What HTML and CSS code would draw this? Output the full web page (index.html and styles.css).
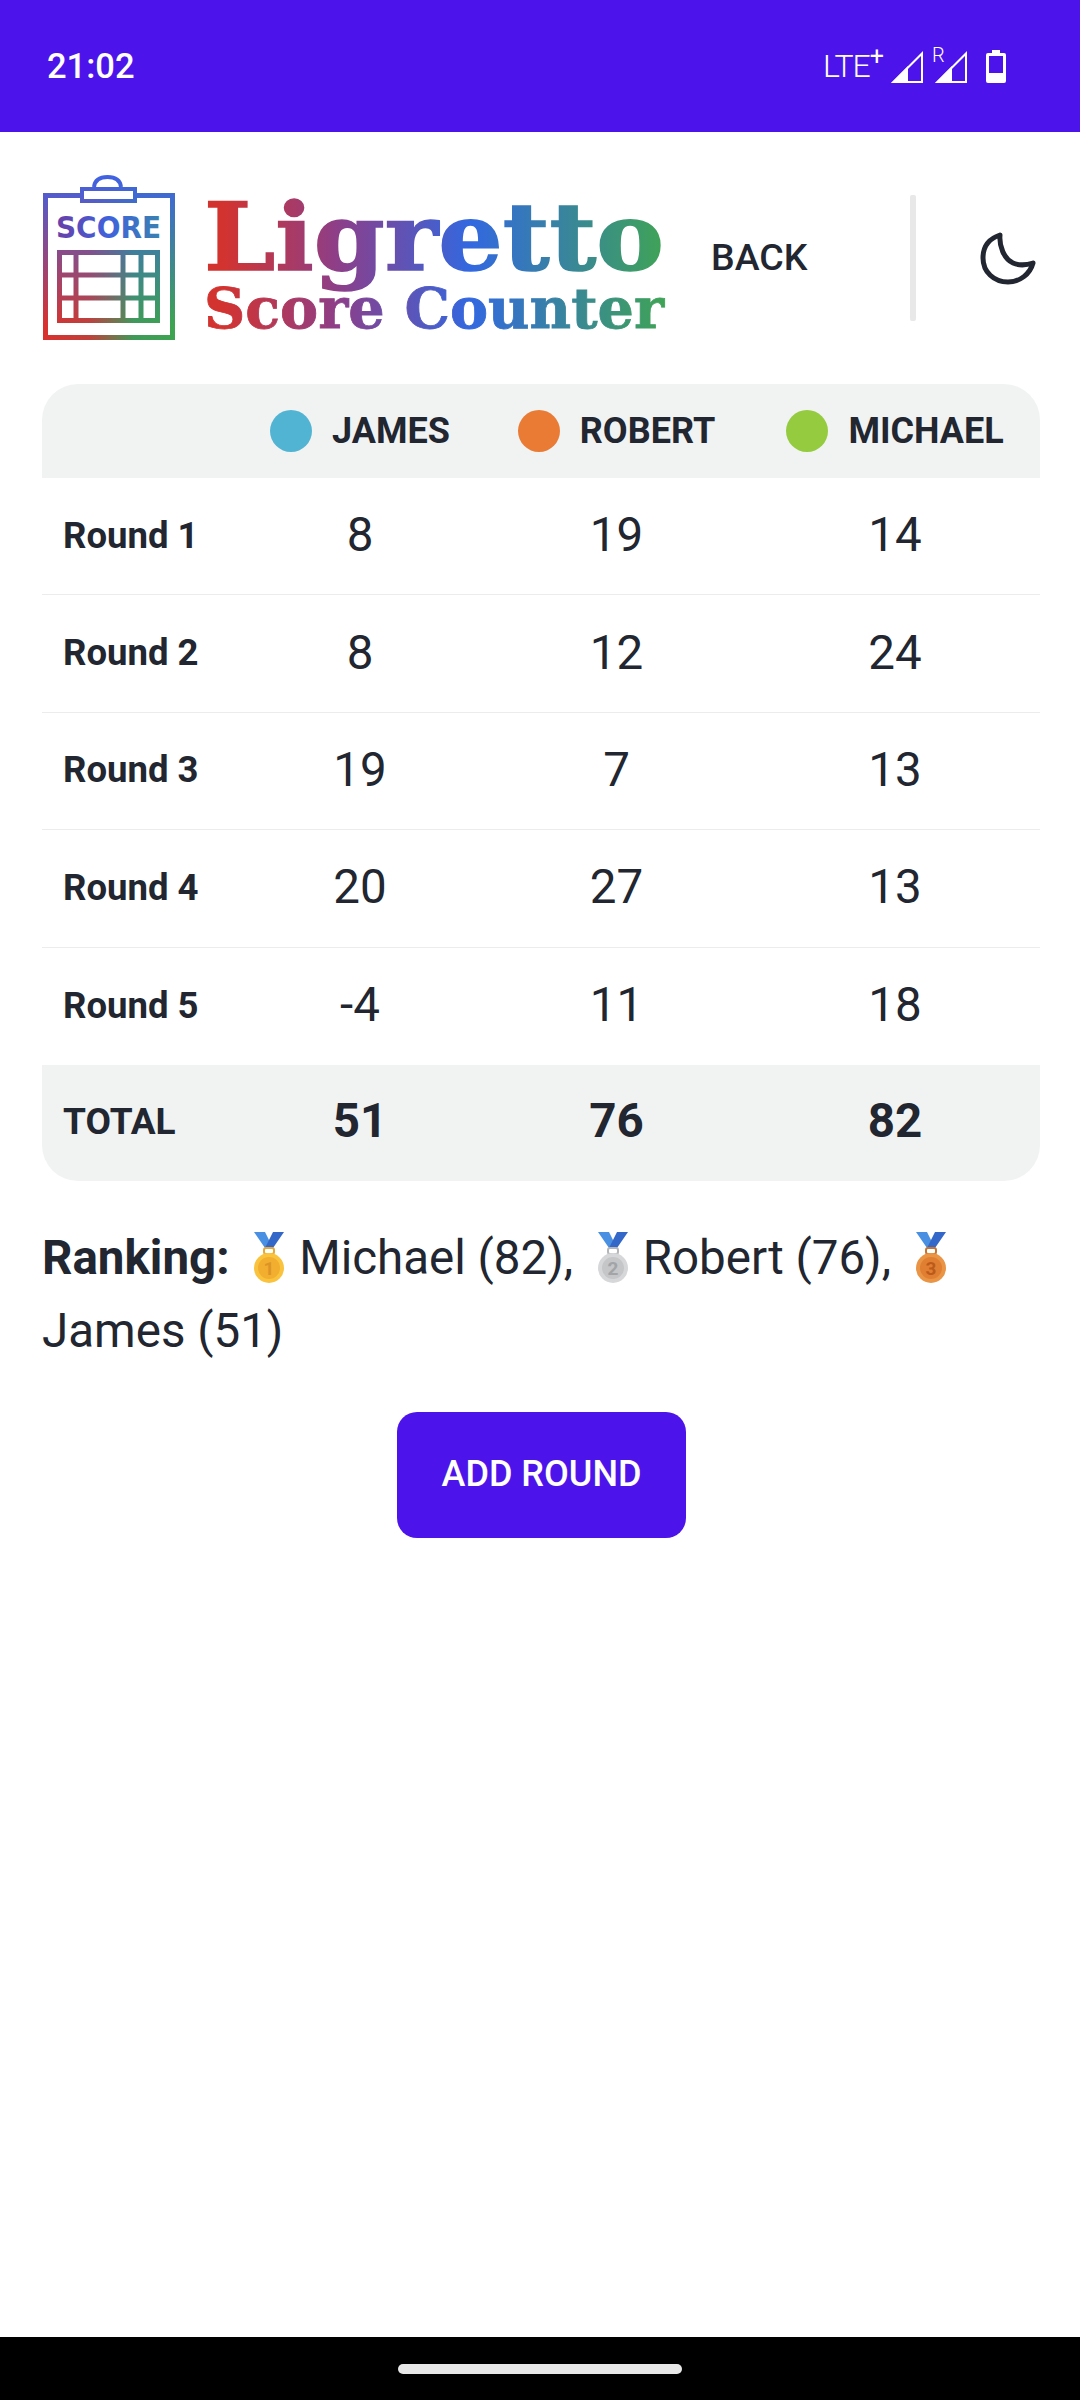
FILE: index.html
```html
<!DOCTYPE html>
<html lang="en">
<head>
  <meta charset="UTF-8" />
  <meta name="viewport" content="width=device-width, initial-scale=1.0"/>
  <title>Ligretto Score Counter</title>
  <link rel="stylesheet" href="styles.css">
</head>
<body>
  <svg class="defs" width="0" height="0">
    <defs>
      <linearGradient id="logoBase" gradientUnits="userSpaceOnUse" x1="0" y1="0" x2="135" y2="0">
        <stop offset="0" stop-color="#da302e"/>
        <stop offset="0.35" stop-color="#c0403a"/>
        <stop offset="0.68" stop-color="#3f9a58"/>
        <stop offset="1" stop-color="#3da550"/>
      </linearGradient>
      <linearGradient id="logoTop" gradientUnits="userSpaceOnUse" x1="0" y1="0" x2="0" y2="150">
        <stop offset="0" stop-color="#3f62e4"/>
        <stop offset="1" stop-color="#3f62e4" stop-opacity="0"/>
      </linearGradient>
      <linearGradient id="scoreGrad" gradientUnits="userSpaceOnUse" x1="14" y1="0" x2="119" y2="0">
        <stop offset="0" stop-color="#6a3fa8"/>
        <stop offset="0.5" stop-color="#3f62dc"/>
        <stop offset="1" stop-color="#3a82b0"/>
      </linearGradient>
      <linearGradient id="textGrad" gradientUnits="userSpaceOnUse" x1="0" y1="0" x2="460" y2="0">
        <stop offset="0.04" stop-color="#d3332f"/>
        <stop offset="0.3" stop-color="#8a3f8c"/>
        <stop offset="0.58" stop-color="#3268e0"/>
        <stop offset="1" stop-color="#3fa356"/>
      </linearGradient>
      <mask id="logoMask" maskUnits="userSpaceOnUse" x="0" y="0" width="135" height="168">
        <g fill="none" stroke="#fff">
          <path d="M38 20.500H3.500V162.500H130.500V20.500H95" stroke-width="5"/>
          <rect x="40" y="14" width="53" height="12" stroke-width="4"/>
          <path d="M52 12C53 4 59 2 65.500 2C72 2 78 4 79 12" stroke-width="4"/>
          <rect x="17.500" y="77.500" width="98" height="68" stroke-width="5"/>
          <path d="M34 77V146M81 77V146M99 77V146M17 100H116M17 123H116" stroke-width="5"/>
        </g>
      </mask>
      <g id="ribbon">
        <path d="M1 0H12L20 16H12Z" fill="#4a90e2"/>
        <path d="M31 0H20L12 16H20Z" fill="#3367c8"/>
      </g>
    </defs>
  </svg>

  <div class="status-bar">
    <span class="clock">21:02</span>
    <div class="status-icons">
      <span class="lte">LTE<sup>+</sup></span>
      <svg class="signal" width="32" height="32" viewBox="0 0 32 32">
        <path d="M31 2.500V31H2.500Z" fill="none" stroke="#fff" stroke-width="2"/>
        <path d="M0 32 17 15V32Z" fill="#fff"/>
      </svg>
      <div class="signal-roaming">
        <span class="roaming">R</span>
        <svg class="signal" width="32" height="32" viewBox="0 0 32 32">
          <path d="M31 2.500V31H2.500Z" fill="none" stroke="#fff" stroke-width="2"/>
          <path d="M0 32 17 15V32Z" fill="#fff"/>
        </svg>
      </div>
      <svg class="battery" width="20" height="33" viewBox="0 0 20 33">
        <path d="M6 0H14V3H18Q20 3 20 5V31Q20 33 18 33H2Q0 33 0 31V5Q0 3 2 3H6Z" fill="#fff"/>
        <rect x="3" y="6" width="14" height="17" fill="#4c14eb"/>
      </svg>
    </div>
  </div>

  <div class="page">
    <header class="top">
      <svg class="logo" width="135" height="168" viewBox="0 0 135 168">
        <g mask="url(#logoMask)">
          <rect width="135" height="168" fill="url(#logoBase)"/>
          <rect width="135" height="168" fill="url(#logoTop)"/>
        </g>
        <text class="logo-score" x="14" y="63" textLength="105" lengthAdjust="spacingAndGlyphs" fill="url(#scoreGrad)">SCORE</text>
      </svg>
      <svg class="wordmark" width="470" height="160" viewBox="0 0 470 160">
        <text class="word-main" x="0" y="92" textLength="460" lengthAdjust="spacingAndGlyphs" fill="url(#textGrad)" stroke="url(#textGrad)">Ligretto</text>
        <text class="word-sub" x="0" y="150" textLength="460" lengthAdjust="spacingAndGlyphs" fill="url(#textGrad)" stroke="url(#textGrad)">Score Counter</text>
      </svg>
      <span class="back">BACK</span>
      <div class="divider"></div>
      <svg class="moon" width="56" height="54" viewBox="0 0 56 54">
        <path d="M20 4C8 8 3 17 3 27C3 41 14 51 28 51C40 51 50 43 53 32C47 34 40 35 33 32C24 28 19 15 20 4Z" fill="none" stroke="#212630" stroke-width="5" stroke-linejoin="round"/>
      </svg>
    </header>

    <table class="scores">
      <thead>
        <tr>
          <th class="col-label"></th>
          <th class="col-james"><span class="player"><i class="dot dot-james"></i>JAMES</span></th>
          <th class="col-robert"><span class="player"><i class="dot dot-robert"></i>ROBERT</span></th>
          <th class="col-michael"><span class="player"><i class="dot dot-michael"></i>MICHAEL</span></th>
        </tr>
      </thead>
      <tbody>
        <tr><th>Round 1</th><td>8</td><td>19</td><td>14</td></tr>
        <tr><th>Round 2</th><td>8</td><td>12</td><td>24</td></tr>
        <tr><th>Round 3</th><td>19</td><td>7</td><td>13</td></tr>
        <tr><th>Round 4</th><td>20</td><td>27</td><td>13</td></tr>
        <tr><th>Round 5</th><td>-4</td><td>11</td><td>18</td></tr>
      </tbody>
      <tfoot>
        <tr><th>TOTAL</th><td>51</td><td>76</td><td>82</td></tr>
      </tfoot>
    </table>

    <p class="ranking">
      <b>Ranking:</b>
      <svg class="medal" width="32" height="52" viewBox="0 0 32 52">
        <use href="#ribbon"/>
        <rect x="11" y="16" width="10" height="6" rx="2" fill="none" stroke="#e8a838" stroke-width="2"/>
        <circle cx="16" cy="36" r="15" fill="#fac33e"/>
        <circle cx="16" cy="36" r="11" fill="#f2ae2e"/>
        <text class="medal-num" x="16" y="43" text-anchor="middle" fill="#dd9426">1</text>
      </svg>
      Michael (82),
      <svg class="medal" width="32" height="52" viewBox="0 0 32 52">
        <use href="#ribbon"/>
        <rect x="11" y="16" width="10" height="6" rx="2" fill="none" stroke="#b4b6b9" stroke-width="2"/>
        <circle cx="16" cy="36" r="15" fill="#d6d7d9"/>
        <circle cx="16" cy="36" r="11" fill="#c4c6c8"/>
        <text class="medal-num" x="16" y="43" text-anchor="middle" fill="#a2a4a7">2</text>
      </svg>
      Robert (76),
      <svg class="medal" width="32" height="52" viewBox="0 0 32 52">
        <use href="#ribbon"/>
        <rect x="11" y="16" width="10" height="6" rx="2" fill="none" stroke="#c87430" stroke-width="2"/>
        <circle cx="16" cy="36" r="15" fill="#ea9446"/>
        <circle cx="16" cy="36" r="11" fill="#e07f32"/>
        <text class="medal-num" x="16" y="43" text-anchor="middle" fill="#bc5a1c">3</text>
      </svg>
      James (51)
    </p>

    <div class="actions">
      <button class="add-round">ADD ROUND</button>
    </div>
  </div>

  <div class="nav-bar"><div class="handle"></div></div>
</body>
</html>
```

FILE: styles.css
```css
* {
  box-sizing: border-box;
}

html, body {
  margin: 0;
  padding: 0;
}

body {
  width: 1080px;
  height: 2400px;
  display: flex;
  flex-direction: column;
  font-family: Roboto, "Liberation Sans", sans-serif;
  color: #212630;
  background: #fff;
}

.defs {
  position: absolute;
}

/* status bar */
.status-bar {
  height: 132px;
  flex-shrink: 0;
  background: #4c14eb;
  color: #fff;
  display: flex;
  align-items: center;
  justify-content: space-between;
  padding: 0 74px 0 47px;
}

.clock {
  font-size: 34.500px;
  font-weight: 500;
}

.status-icons {
  display: flex;
  align-items: flex-end;
  height: 33px;
}

.lte {
  font-size: 32px;
  font-weight: 300;
  line-height: 28px;
  letter-spacing: -1px;
  margin: 0 8px 3px 0;
}

.lte sup {
  font-size: 25px;
  line-height: 0;
  font-weight: 400;
}

.signal-roaming {
  position: relative;
  display: flex;
  margin-left: 12px;
}

.roaming {
  position: absolute;
  left: -3px;
  top: -6px;
  font-size: 20px;
  line-height: 20px;
  font-weight: 300;
}

.battery {
  margin-left: 19px;
}

/* header */
.page {
  flex: 1;
  padding: 0 40px 0 42px;
}

.top {
  display: flex;
  align-items: center;
  height: 252px;
}

.top > * {
  flex-shrink: 0;
}

.logo {
  margin-top: 2px;
}

.logo-score {
  font-family: "DejaVu Sans", sans-serif;
  font-size: 30px;
  font-weight: 700;
}

.wordmark {
  margin-left: 27px;
  overflow: visible;
}

.word-main {
  font-family: "DejaVu Serif", serif;
  font-size: 94px;
  font-weight: 700;
  stroke-width: 1.500px;
}

.word-sub {
  font-family: "DejaVu Serif", serif;
  font-size: 56px;
  font-weight: 700;
  stroke-width: 0.800px;
}

.back {
  margin: 0 0 3px 37px;
  font-size: 37.500px;
  font-weight: 500;
}

.divider {
  width: 6px;
  height: 126px;
  margin-left: 103px;
  background: #e8e8e8;
  border-radius: 2px;
}

.moon {
  margin-left: 64px;
}

/* score table */
.scores {
  width: 998px;
  border-collapse: separate;
  border-spacing: 0;
  table-layout: fixed;
}

.scores th,
.scores td {
  padding: 0;
  text-align: center;
}

.col-label { width: 195px; }
.col-james { width: 246px; }
.col-robert { width: 267px; }

.scores thead th {
  height: 94px;
  background: #f1f2f2;
  font-size: 36px;
  font-weight: 700;
}

.scores thead th:first-child {
  border-top-left-radius: 36px;
}

.scores thead th:last-child {
  border-top-right-radius: 36px;
}

.player {
  display: flex;
  align-items: center;
  justify-content: center;
  gap: 20px;
}

.dot {
  width: 42px;
  height: 42px;
  border-radius: 50%;
}

.dot-james { background: #52b4d3; }
.dot-robert { background: #e97b35; }
.dot-michael { background: #95cb3e; }

.scores tbody th,
.scores tfoot th {
  text-align: left;
  padding: 0 0 2px 21px;
  font-weight: 700;
}

.scores tbody th {
  font-size: 36.500px;
}

.scores tfoot th {
  font-size: 37px;
}

.scores tbody th,
.scores tbody td {
  height: 117.400px;
  border-bottom: 1.500px solid #ececec;
}

.scores tbody tr:last-child th,
.scores tbody tr:last-child td {
  border-bottom: none;
  height: 117px;
}

.scores td {
  font-size: 47.500px;
  font-weight: 400;
  padding-bottom: 2px;
}

.scores tfoot th,
.scores tfoot td {
  height: 116px;
  background: #f1f2f2;
}

.scores tfoot td {
  font-weight: 700;
  padding-bottom: 3px;
}

.scores tfoot th:first-child {
  border-bottom-left-radius: 36px;
}

.scores tfoot td:last-child {
  border-bottom-right-radius: 36px;
}

/* ranking */
.ranking {
  margin: 41px 0 0;
  font-size: 47.500px;
  line-height: 73px;
}

.medal {
  vertical-align: -10px;
  margin: 0 2px 0 12px;
}

.medal-num {
  font-size: 19px;
  font-weight: 700;
}

.actions {
  display: flex;
  justify-content: center;
  margin-top: 44px;
  padding-left: 1px;
}

.add-round {
  width: 289px;
  height: 126px;
  border: none;
  border-radius: 20px;
  background: #4c14eb;
  color: #fff;
  font-family: Roboto, sans-serif;
  font-size: 36px;
  font-weight: 500;
  padding: 0 0 2px;
}

/* android nav bar */
.nav-bar {
  height: 63px;
  flex-shrink: 0;
  background: #000;
  display: flex;
  align-items: center;
  justify-content: center;
}

.handle {
  width: 284px;
  height: 10px;
  border-radius: 5px;
  background: #e8e8e8;
}
```
